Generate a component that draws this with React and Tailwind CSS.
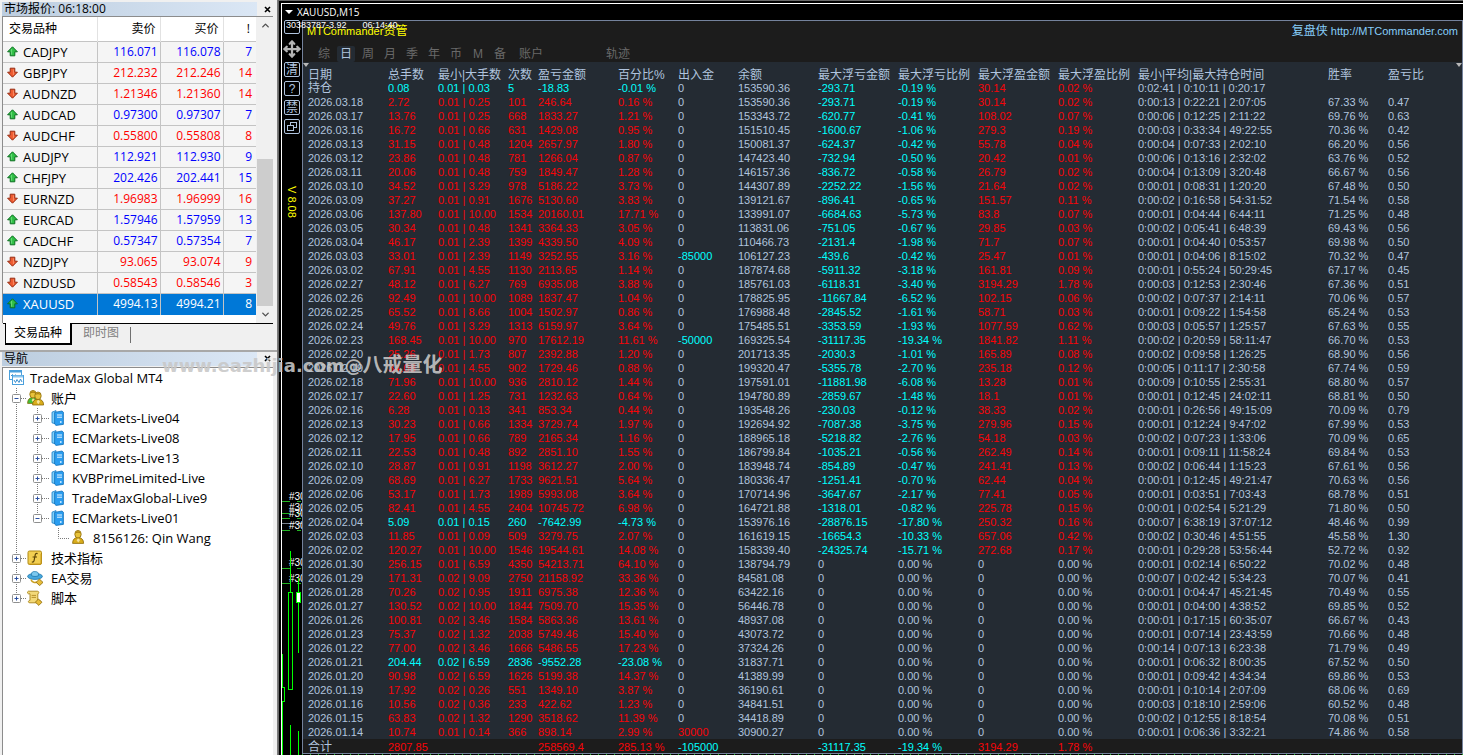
import React, { useState } from 'react';
import { Move, ChevronUp, ChevronDown } from 'lucide-react';

const quotes = [
  ['CADJPY', '116.071', '116.078', 7, true],
  ['GBPJPY', '212.232', '212.246', 14, false],
  ['AUDNZD', '1.21346', '1.21360', 14, false],
  ['AUDCAD', '0.97300', '0.97307', 7, true],
  ['AUDCHF', '0.55800', '0.55808', 8, false],
  ['AUDJPY', '112.921', '112.930', 9, true],
  ['CHFJPY', '202.426', '202.441', 15, true],
  ['EURNZD', '1.96983', '1.96999', 16, false],
  ['EURCAD', '1.57946', '1.57959', 13, true],
  ['CADCHF', '0.57347', '0.57354', 7, true],
  ['NZDJPY', '93.065', '93.074', 9, false],
  ['NZDUSD', '0.58543', '0.58546', 3, false],
  ['XAUUSD', '4994.13', '4994.21', 8, true],
];

const tree = [
  { level: 0, icon: 'terminal', label: 'TradeMax Global MT4' },
  { level: 1, icon: 'accounts', label: '账户', open: true },
  { level: 2, icon: 'server', label: 'ECMarkets-Live04' },
  { level: 2, icon: 'server', label: 'ECMarkets-Live08' },
  { level: 2, icon: 'server', label: 'ECMarkets-Live13' },
  { level: 2, icon: 'server', label: 'KVBPrimeLimited-Live' },
  { level: 2, icon: 'server', label: 'TradeMaxGlobal-Live9' },
  { level: 2, icon: 'server', label: 'ECMarkets-Live01', open: true, last: true },
  { level: 3, icon: 'user', label: '8156126: Qin Wang' },
  { level: 1, icon: 'indicator', label: '技术指标' },
  { level: 1, icon: 'expert', label: 'EA交易' },
  { level: 1, icon: 'script', label: '脚本', last: true },
];

const columns = ['日期', '总手数', '最小|大手数', '次数', '盈亏金额', '百分比%', '出入金', '余额', '最大浮亏金额', '最大浮亏比例', '最大浮盈金额', '最大浮盈比例', '最小|平均|最大持仓时间', '胜率', '盈亏比'];

// date, lots, min lot, max lot, count, profit, percent, deposit, balance,
// max loss, loss %, max gain, gain %, min / avg / max holding time, win rate, ratio
const report = `
持仓,0.08,0.01,0.03,5,-18.83,-0.01,0,153590.36,-293.71,-0.19,30.14,0.02,0:02:41,0:10:11,0:20:17,,
2026.03.18,2.72,0.01,0.25,101,246.64,0.16,0,153590.36,-293.71,-0.19,30.14,0.02,0:00:13,0:22:21,2:07:05,67.33,0.47
2026.03.17,13.76,0.01,0.25,668,1833.27,1.21,0,153343.72,-620.77,-0.41,108.02,0.07,0:00:06,0:12:25,2:11:22,69.76,0.63
2026.03.16,16.72,0.01,0.66,631,1429.08,0.95,0,151510.45,-1600.67,-1.06,279.3,0.19,0:00:03,0:33:34,49:22:55,70.36,0.42
2026.03.13,31.15,0.01,0.48,1204,2657.97,1.80,0,150081.37,-624.37,-0.42,55.78,0.04,0:00:04,0:07:33,2:02:10,66.20,0.56
2026.03.12,23.86,0.01,0.48,781,1266.04,0.87,0,147423.40,-732.94,-0.50,20.42,0.01,0:00:06,0:13:16,2:32:02,63.76,0.52
2026.03.11,20.06,0.01,0.48,759,1849.47,1.28,0,146157.36,-836.72,-0.58,26.79,0.02,0:00:04,0:13:09,3:20:48,66.67,0.56
2026.03.10,34.52,0.01,3.29,978,5186.22,3.73,0,144307.89,-2252.22,-1.56,21.64,0.02,0:00:01,0:08:31,1:20:20,67.48,0.50
2026.03.09,37.27,0.01,0.91,1676,5130.60,3.83,0,139121.67,-896.41,-0.65,151.57,0.11,0:00:02,0:16:58,54:31:52,71.54,0.58
2026.03.06,137.80,0.01,10.00,1534,20160.01,17.71,0,133991.07,-6684.63,-5.73,83.8,0.07,0:00:01,0:04:44,6:44:11,71.25,0.48
2026.03.05,30.34,0.01,0.48,1341,3364.33,3.05,0,113831.06,-751.05,-0.67,29.85,0.03,0:00:02,0:05:41,6:48:39,69.43,0.56
2026.03.04,46.17,0.01,2.39,1399,4339.50,4.09,0,110466.73,-2131.4,-1.98,71.7,0.07,0:00:01,0:04:40,0:53:57,69.98,0.50
2026.03.03,33.01,0.01,2.39,1149,3252.55,3.16,-85000,106127.23,-439.6,-0.42,25.47,0.01,0:00:01,0:04:06,8:15:02,70.32,0.47
2026.03.02,67.91,0.01,4.55,1130,2113.65,1.14,0,187874.68,-5911.32,-3.18,161.81,0.09,0:00:01,0:55:24,50:29:45,67.17,0.45
2026.02.27,48.12,0.01,6.27,769,6935.08,3.88,0,185761.03,-6118.31,-3.40,3194.29,1.78,0:00:03,0:12:53,2:30:46,67.36,0.51
2026.02.26,92.49,0.01,10.00,1089,1837.47,1.04,0,178825.95,-11667.84,-6.52,102.15,0.06,0:00:02,0:07:37,2:14:11,70.06,0.57
2026.02.25,65.52,0.01,8.66,1004,1502.97,0.86,0,176988.48,-2845.52,-1.61,58.71,0.03,0:00:01,0:09:22,1:54:58,65.24,0.53
2026.02.24,49.76,0.01,3.29,1313,6159.97,3.64,0,175485.51,-3353.59,-1.93,1077.59,0.62,0:00:03,0:05:57,1:25:57,67.63,0.55
2026.02.23,168.45,0.01,10.00,970,17612.19,11.61,-50000,169325.54,-31117.35,-19.34,1841.82,1.11,0:00:02,0:20:59,58:11:47,66.70,0.53
2026.02.20,25.26,0.01,1.73,807,2392.88,1.20,0,201713.35,-2030.3,-1.01,165.89,0.08,0:00:02,0:09:58,1:26:25,68.90,0.56
2026.02.19,34.08,0.01,4.55,902,1729.46,0.88,0,199320.47,-5355.78,-2.70,235.18,0.12,0:00:05,0:11:17,2:30:58,67.74,0.59
2026.02.18,71.96,0.01,10.00,936,2810.12,1.44,0,197591.01,-11881.98,-6.08,13.28,0.01,0:00:09,0:10:55,2:55:31,68.80,0.57
2026.02.17,22.60,0.01,1.25,731,1232.63,0.64,0,194780.89,-2859.67,-1.48,18.1,0.01,0:00:01,0:12:45,24:02:11,68.81,0.50
2026.02.16,6.28,0.01,0.13,341,853.34,0.44,0,193548.26,-230.03,-0.12,38.33,0.02,0:00:01,0:26:56,49:15:09,70.09,0.79
2026.02.13,30.23,0.01,0.66,1334,3729.74,1.97,0,192694.92,-7087.38,-3.75,279.96,0.15,0:00:01,0:12:24,9:47:02,67.99,0.53
2026.02.12,17.95,0.01,0.66,789,2165.34,1.16,0,188965.18,-5218.82,-2.76,54.18,0.03,0:00:02,0:07:23,1:33:06,70.09,0.65
2026.02.11,22.53,0.01,0.48,892,2851.10,1.55,0,186799.84,-1035.21,-0.56,262.49,0.14,0:00:01,0:09:11,11:58:24,69.84,0.53
2026.02.10,28.87,0.01,0.91,1198,3612.27,2.00,0,183948.74,-854.89,-0.47,241.41,0.13,0:00:02,0:06:44,1:15:23,67.61,0.56
2026.02.09,68.69,0.01,6.27,1733,9621.51,5.64,0,180336.47,-1251.41,-0.70,62.44,0.04,0:00:01,0:12:45,49:21:47,70.63,0.56
2026.02.06,53.17,0.01,1.73,1989,5993.08,3.64,0,170714.96,-3647.67,-2.17,77.41,0.05,0:00:01,0:03:51,7:03:43,68.78,0.51
2026.02.05,82.41,0.01,4.55,2404,10745.72,6.98,0,164721.88,-1318.01,-0.82,225.78,0.15,0:00:01,0:02:54,5:21:29,71.80,0.50
2026.02.04,5.09,0.01,0.15,260,-7642.99,-4.73,0,153976.16,-28876.15,-17.80,250.32,0.16,0:00:07,6:38:19,37:07:12,48.46,0.99
2026.02.03,11.85,0.01,0.09,509,3279.75,2.07,0,161619.15,-16654.3,-10.33,657.06,0.42,0:00:02,0:30:46,4:51:55,45.58,1.30
2026.02.02,120.27,0.01,10.00,1546,19544.61,14.08,0,158339.40,-24325.74,-15.71,272.68,0.17,0:00:01,0:29:28,53:56:44,52.72,0.92
2026.01.30,256.15,0.01,6.59,4350,54213.71,64.10,0,138794.79,0,0.00,0,0.00,0:00:01,0:02:14,6:50:22,70.02,0.48
2026.01.29,171.31,0.02,9.09,2750,21158.92,33.36,0,84581.08,0,0.00,0,0.00,0:00:07,0:02:42,5:34:23,70.07,0.41
2026.01.28,70.26,0.02,0.95,1911,6975.38,12.36,0,63422.16,0,0.00,0,0.00,0:00:01,0:04:47,45:21:45,70.49,0.55
2026.01.27,130.52,0.02,10.00,1844,7509.70,15.35,0,56446.78,0,0.00,0,0.00,0:00:01,0:04:00,4:38:52,69.85,0.52
2026.01.26,100.81,0.02,3.46,1584,5863.36,13.61,0,48937.08,0,0.00,0,0.00,0:00:01,0:17:15,60:35:07,66.67,0.43
2026.01.23,75.37,0.02,1.32,2038,5749.46,15.40,0,43073.72,0,0.00,0,0.00,0:00:01,0:07:14,23:43:59,70.66,0.48
2026.01.22,77.00,0.02,3.46,1666,5486.55,17.23,0,37324.26,0,0.00,0,0.00,0:00:14,0:07:13,6:23:38,71.79,0.49
2026.01.21,204.44,0.02,6.59,2836,-9552.28,-23.08,0,31837.71,0,0.00,0,0.00,0:00:01,0:06:32,8:00:35,67.52,0.50
2026.01.20,90.98,0.02,6.59,1626,5199.38,14.37,0,41389.99,0,0.00,0,0.00,0:00:01,0:09:42,4:34:34,69.86,0.53
2026.01.19,17.92,0.02,0.26,551,1349.10,3.87,0,36190.61,0,0.00,0,0.00,0:00:01,0:10:14,2:07:09,68.06,0.69
2026.01.16,10.56,0.02,0.36,233,422.62,1.23,0,34841.51,0,0.00,0,0.00,0:00:03,0:18:10,2:59:06,60.52,0.48
2026.01.15,63.83,0.02,1.32,1290,3518.62,11.39,0,34418.89,0,0.00,0,0.00,0:00:02,0:12:55,8:18:54,70.08,0.51
2026.01.14,10.74,0.01,0.14,366,898.14,2.99,30000,30900.27,0,0.00,0,0.00,0:00:01,0:06:36,3:32:21,74.86,0.58
`.trim().split('\n').map(line => line.split(','));

const tone = value => {
  const n = parseFloat(value);
  if (n < 0) return 'text-[#00ffff]';
  if (n > 0) return 'text-[#f80408]';
  return '';
};

const pct = value => (value ? `${value} %` : '');

const QuoteArrow = ({ up }) => (
  <svg width="11" height="11" viewBox="0 0 11 11" className={up ? 'shrink-0' : 'shrink-0 rotate-180'}>
    <path
      d="M5.5 .8 L10.4 5.8 H7.8 V9.8 H3.2 V5.8 H.6 Z"
      fill={up ? '#2fbf45' : '#ee5a30'}
      stroke={up ? '#0b6e20' : '#962a10'}
      strokeWidth="1"
      strokeLinejoin="round"
    />
    <path d="M4.6 3 V8.6" stroke={up ? '#7be08a' : '#ff9a74'} strokeWidth=".8" />
  </svg>
);

const Person = ({ x = 0, y = 0, fill = '#d9ad1c' }) => (
  <g transform={`translate(${x} ${y})`} stroke="#8c6a08" strokeWidth=".8">
    <path d="M.6 13.4 C.6 9.6 2.4 7.6 6 7.6 S11.6 9.6 11.6 13.4 Z" fill={fill} />
    <path d="M6 8 L4.6 10.4 L6.4 12.6 L8 10 Z" fill="#f6e29a" stroke="none" />
    <ellipse cx="6" cy="4.2" rx="3.2" ry="3.8" fill="#e8c33c" />
    <path d="M3 3.4 C3.4 .8 8.4 .4 9 3.6 C7 2.4 5 2.6 3 3.4 Z" fill="#a98212" stroke="none" />
  </g>
);

const TreeIcon = ({ name }) => {
  if (name === 'terminal') {
    return (
      <svg width="16" height="16" viewBox="0 0 16 16" className="shrink-0">
        <rect x=".5" y=".5" width="12" height="9" fill="#fff" stroke="#4aa0dc" />
        <path d="M1 1.5 H12" stroke="#4aa0dc" strokeWidth="2" />
        <path d="M2 6 L3.5 4.5 L5 7 L6.5 4.5" fill="none" stroke="#3b8fd0" />
        <rect x="3.5" y="5.5" width="11" height="9" fill="#fff" stroke="#4aa0dc" />
        <path d="M4 6.5 H14" stroke="#8cc6ee" strokeWidth="2" />
        <path d="M5 10 L6.5 12.5 L8 9.5 L10 12.5 L11.5 9 L13 12" fill="none" stroke="#3b8fd0" />
      </svg>
    );
  }
  if (name === 'accounts') {
    return (
      <svg width="18" height="16" viewBox="0 0 18 16" className="shrink-0">
        <Person x={0} y={0} fill="#3cc43c" />
        <Person x={5} y={1.6} />
      </svg>
    );
  }
  if (name === 'server') {
    return (
      <svg width="13" height="16" viewBox="0 0 13 16" className="shrink-0">
        <path d="M1 2.2 L5 .6 V14 L1 12.8 Z" fill="#7fd0fa" stroke="#1479c4" strokeWidth=".8" />
        <path d="M3.6 2.4 L11 1 L12.4 2.2 V14.4 L5 15.4 L3.6 14 Z" fill="#2a9df0" stroke="#1270b8" strokeWidth=".8" />
        <path d="M6 5 H11 M6 7.2 H11" stroke="#e8f6ff" strokeWidth="1" />
        <circle cx="9.8" cy="12" r=".9" fill="#d8f0ff" />
      </svg>
    );
  }
  if (name === 'user') {
    return (
      <svg width="13" height="15" viewBox="0 0 13 15" className="shrink-0">
        <Person />
      </svg>
    );
  }
  if (name === 'indicator') {
    return (
      <svg width="16" height="16" viewBox="0 0 16 16" className="shrink-0">
        <rect x="1" y="1" width="13.5" height="13.5" rx="1.5" fill="#f2cf52" stroke="#b08a14" />
        <path d="M2 14 L14 14 L14 4" fill="none" stroke="#c99a1e" />
        <path d="M10.6 3.6 C8.6 3 8.2 4.4 8 6 L7.2 10 C7 11.8 6.2 12.4 4.8 11.8 M5.6 7 H10" fill="none" stroke="#5c4406" strokeWidth="1.2" />
      </svg>
    );
  }
  if (name === 'expert') {
    return (
      <svg width="17" height="16" viewBox="0 0 17 16" className="shrink-0">
        <ellipse cx="8" cy="6.4" rx="7.4" ry="3" fill="#46a7de" stroke="#2277aa" strokeWidth=".8" />
        <path d="M4.4 5.6 C4.4 1.6 6 1.4 8 1.6 S11.4 1.6 11.6 5.6 C9.6 6.8 6.4 6.8 4.4 5.6 Z" fill="#7cc8ee" stroke="#2277aa" strokeWidth=".8" />
        <path d="M4 9.6 C5 12.6 8 13 10 12" fill="none" stroke="#caa024" strokeWidth="1.6" />
        <path d="M12.4 9 L16 12.4 L12.6 15.6 L9.2 12.4 Z" fill="#e8bd3a" stroke="#8c6a08" strokeWidth=".8" />
      </svg>
    );
  }
  return (
    <svg width="16" height="16" viewBox="0 0 16 16" className="shrink-0">
      <path d="M1.4 1.2 H10.4 C12.4 1.2 12 3.8 10.8 3.8 V10.4 H13 V12.8 H2.8 C.8 12.8 1 10.4 3 10.4 V3.8 H1.4 C.2 3.4 .2 1.6 1.4 1.2 Z" fill="#f3d978" stroke="#a8841a" strokeWidth=".9" />
      <path d="M4.6 5.4 H9 M4.6 7.4 H9" stroke="#b8922a" strokeWidth="1" />
      <path d="M11.4 9 L15 12.2 L11.8 15.4 L8.4 12.2 Z" fill="#e8bd3a" stroke="#8c6a08" strokeWidth=".8" />
    </svg>
  );
};

const Expander = ({ x, open }) => (
  <g>
    <rect x={x - 3.5} y="6.5" width="8" height="8" rx="1" fill="#fff" stroke="#8e8f8f" />
    <path d={`M${x - 1.5} 10.5 H${x + 2.5}`} stroke="#2a4fa0" />
    {!open && <path d={`M${x + 0.5} 8.5 V12.5`} stroke="#2a4fa0" />}
  </g>
);

const Guide = ({ item }) => {
  const dots = { stroke: '#7a7a7a', strokeDasharray: '1 1', fill: 'none' };
  if (item.level === 0) return <svg width="6" height="20" className="shrink-0" />;
  if (item.level === 1) {
    return (
      <svg width="24" height="20" className="shrink-0">
        <path d={item.last ? 'M13.5 0 V10' : 'M13.5 0 V20'} {...dots} />
        <path d="M18 10.5 H24" {...dots} />
        <Expander x={13} open={item.open} />
      </svg>
    );
  }
  if (item.level === 2) {
    return (
      <svg width="48" height="20" className="shrink-0">
        <path d="M13.5 0 V20" {...dots} />
        <path d={item.last ? 'M34.5 0 V10' : 'M34.5 0 V20'} {...dots} />
        <path d="M39 10.5 H46" {...dots} />
        <Expander x={34} open={item.open} />
      </svg>
    );
  }
  return (
    <svg width="69" height="20" className="shrink-0">
      <path d="M13.5 0 V20" {...dots} />
      <path d="M55.5 0 V10.5 H67" {...dots} />
    </svg>
  );
};

const PanelTitle = ({ children }) => (
  <div className="flex h-[14px] items-center pl-[2px] pr-1">
    <h2 className="flex-1 bg-linear-to-r from-[#bccddf] to-[#dbe7f5] pl-[2px] text-xs leading-[14px]">{children}</h2>
    <button aria-label="关闭" className="ml-1 flex h-3 w-3 items-center justify-center">
      <svg width="7" height="7" viewBox="0 0 7 7"><path d="M1 1 L6 6 M6 1 L1 6" stroke="#000" strokeWidth="1.6" /></svg>
    </button>
  </div>
);

const MarketWatch = () => {
  const [selected, setSelected] = useState('XAUUSD');

  return (
    <section className="pt-[2px]">
      <PanelTitle>市场报价: 06:18:00</PanelTitle>
      <div className="ml-[2px] mr-1 flex border-l border-t border-[#8c8c8c] bg-white">
        <div className="flex-1 pb-2">
          <table className="w-full table-fixed border-collapse text-xs">
            <colgroup>
              <col className="w-[94px]" />
              <col className="w-[63px]" />
              <col className="w-[63px]" />
              <col />
            </colgroup>
            <thead>
              <tr className="h-6 border-b border-[#c4c4c4]">
                <th className="border-r border-[#e2e2e2] pl-[6px] text-left font-normal">交易品种</th>
                <th className="border-r border-[#e2e2e2] pr-1 text-right font-normal">卖价</th>
                <th className="border-r border-[#e2e2e2] pr-1 text-right font-normal">买价</th>
                <th className="pr-[6px] text-right font-normal">!</th>
              </tr>
            </thead>
            <tbody>
              {quotes.map(([symbol, bid, ask, spread, up]) => {
                const active = symbol === selected;
                const color = active ? 'text-white' : up ? 'text-[#0000ff]' : 'text-[#ff0000]';
                return (
                  <tr
                    key={symbol}
                    onClick={() => setSelected(symbol)}
                    className={`h-[21px] border-b leading-5 ${active ? 'border-[#0078d7] bg-[#0078d7] text-white' : 'border-[#c4c4c4] bg-[#f5f5f5]'}`}
                  >
                    <td className="border-r border-[#c4c4c4] p-0 pl-1 text-[13px] leading-5">
                      <span className="flex items-center gap-[5px]"><QuoteArrow up={up} />{symbol}</span>
                    </td>
                    <td className={`border-r border-[#c4c4c4] p-0 pr-[2px] text-right ${color}`}>{bid}</td>
                    <td className={`border-r border-[#c4c4c4] p-0 pr-[2px] text-right ${color}`}>{ask}</td>
                    <td className={`p-0 pr-1 text-right ${color}`}>{spread}</td>
                  </tr>
                );
              })}
            </tbody>
          </table>
        </div>
        <div className="flex w-[17px] flex-col bg-[#f0f0f0] pl-px text-[#505050]">
          <button aria-label="向上滚动" className="flex h-[17px] items-center justify-center"><ChevronUp size={11} strokeWidth={3} /></button>
          <div className="flex flex-1 flex-col justify-end"><div className="h-[147px] bg-[#cdcdcd]" /></div>
          <button aria-label="向下滚动" className="flex h-[17px] items-center justify-center"><ChevronDown size={11} strokeWidth={3} /></button>
        </div>
      </div>
      <div className="ml-[3px] mr-1 flex h-[27px] items-start border-t border-black pl-[2px] text-xs">
        <button className="-mt-px h-[22px] border border-b-2 border-t-0 border-r-2 border-black bg-white px-2">交易品种</button>
        <button className="h-[19px] px-[11px] text-[#808080]">即时图</button>
        <span className="mt-[3px] h-4 w-px bg-[#707070]" />
      </div>
    </section>
  );
};

const Navigator = () => (
  <section className="flex flex-1 flex-col border-t-2 border-[#a8a8a8]">
    <PanelTitle>导航</PanelTitle>
    <ul className="ml-[2px] mr-1 mt-px flex-1 border-l border-t border-[#8c8c8c] bg-white text-[13px]">
      {tree.map(item => (
        <li key={item.label} className="flex h-5 items-center whitespace-nowrap leading-5">
          <Guide item={item} />
          <span className={`flex shrink-0 ${item.level === 1 ? 'w-[18px]' : 'w-[15px]'}`}><TreeIcon name={item.icon} /></span>
          <span className="pl-[6px]">{item.label}</span>
        </li>
      ))}
    </ul>
  </section>
);

const ToolButton = ({ label, children }) => (
  <button aria-label={label} className="flex h-[15px] w-4 items-center justify-center overflow-hidden rounded-xs border border-[#b0c4de] text-xs leading-3 text-[#b0c4de]">
    {children}
  </button>
);

// Part of the price chart that stays visible beside the report
const ChartStrip = () => (
  <svg width="20" height="265" viewBox="0 0 20 265" className="block" shapeRendering="crispEdges">
    <g stroke="#22b422" strokeWidth="1">
      {[11.5, 23.5, 28.5, 40.5, 78.5, 93.5].map(y => <path key={y} d={`M0 ${y} H8 M15 ${y} H19`} />)}
    </g>
    <path d="M0 33.5 H20" stroke="#777f8c" />
    <g fill="#fff" fontSize="10" fontFamily="Liberation Sans, sans-serif">
      {[10, 21, 27, 39, 76, 92].map(y => <text key={y} x="7" y={y}>#30</text>)}
    </g>
    <g stroke="#00ff00" fill="none">
      <path d="M8.5 61 V102 M8.5 235 V265 M16.5 88 V163 M16.5 241 V265 M0.5 164 V265" />
      <rect x="6.5" y="102.5" width="4" height="97" fill="#000" />
      <rect x="14.5" y="102.5" width="4" height="10" fill="#fff" />
      <rect x="-0.5" y="197.5" width="3" height="14" fill="#000" />
    </g>
  </svg>
);

const Report = () => {
  const [tab, setTab] = useState('日');

  return (
    <section className="relative min-w-0 flex-1 border border-[#74829c] bg-[#242b33] text-[#b0c4de]">
      <header className="bg-[#1c1c1c]">
        <div className="flex h-5 items-center justify-between pl-1 pr-1 text-[11px]">
          <h1 className="text-[#ffff00]">MTCommander<span className="text-xs">资管</span></h1>
          <a href="http://MTCommander.com" className="text-[#87cefa]"><span className="text-xs">复盘侠</span> http://MTCommander.com</a>
        </div>
        <nav className="flex h-[21px] items-end pl-[10px] text-xs text-[#696969]">
          {['综', '日', '周', '月', '季', '年', '币', 'M', '备', '账户', '轨迹'].map(name => (
            <button
              key={name}
              onClick={() => setTab(name)}
              className={`mx-[2px] h-4 leading-4 ${name === '账户' ? 'mr-[57px] ml-[6px] w-7' : name === '轨迹' ? 'w-7' : 'w-[18px]'} ${name === tab ? 'rounded-xs bg-[#242b33] text-[#b0c4de]' : ''}`}
            >
              {name}
            </button>
          ))}
        </nav>
      </header>
      <span className="absolute left-0 top-[42px] border-x-3 border-t-4 border-x-transparent border-t-[#b8b8b8]" />
      <span className="absolute right-0 top-[42px] border-x-3 border-t-4 border-x-transparent border-t-[#b8b8b8]" />
      <table className="w-full table-fixed border-collapse whitespace-nowrap text-[11px] leading-[14px]">
        <colgroup>
          <col className="w-[85px]" />
          <col className="w-[50px]" />
          <col className="w-[70px]" />
          <col className="w-[30px]" />
          <col className="w-[80px]" />
          <col className="w-[60px]" />
          <col className="w-[60px]" />
          <col className="w-[80px]" />
          <col className="w-[80px]" />
          <col className="w-[80px]" />
          <col className="w-[80px]" />
          <col className="w-[80px]" />
          <col className="w-[190px]" />
          <col className="w-[60px]" />
          <col />
        </colgroup>
        <thead>
          <tr className="h-[19px] align-bottom text-xs leading-3">
            {columns.map((name, i) => (
              <th key={name} className={`p-0 text-left font-normal ${i === 0 ? 'pl-[5px]' : ''}`}>{name}</th>
            ))}
          </tr>
        </thead>
        <tbody>
          {report.map(r => (
            <tr key={r[0]} className="h-[14px]">
              <td className={r[0] === '持仓' ? 'p-0 pl-[5px] text-xs leading-[14px]' : 'p-0 pl-[5px]'}>{r[0]}</td>
              <td className={`p-0 ${tone(r[5])}`}>{r[1]}</td>
              <td className={`p-0 ${tone(r[5])}`}>{r[2]} | {r[3]}</td>
              <td className={`p-0 ${tone(r[5])}`}>{r[4]}</td>
              <td className={`p-0 ${tone(r[5])}`}>{r[5]}</td>
              <td className={`p-0 ${tone(r[6])}`}>{pct(r[6])}</td>
              <td className={`p-0 ${tone(r[7])}`}>{r[7]}</td>
              <td className="p-0">{r[8]}</td>
              <td className={`p-0 ${tone(r[9])}`}>{r[9]}</td>
              <td className={`p-0 ${tone(r[10])}`}>{pct(r[10])}</td>
              <td className={`p-0 ${tone(r[11])}`}>{r[11]}</td>
              <td className={`p-0 ${tone(r[12])}`}>{pct(r[12])}</td>
              <td className="p-0">{r[13]} | {r[14]} | {r[15]}</td>
              <td className="p-0">{pct(r[16])}</td>
              <td className="p-0">{r[17]}</td>
            </tr>
          ))}
        </tbody>
        <tfoot>
          <tr className="h-[14px] bg-[#1c1c1c] align-bottom leading-3">
            {['合计', '2807.85', '', '', '258569.4', '285.13 %', '-105000', '', '-31117.35', '-19.34 %', '3194.29', '1.78 %', '', '', ''].map((v, i) => (
              <td key={i} className={`p-0 ${i === 0 ? 'pl-[5px] text-xs leading-3' : tone(v)}`}>{v}</td>
            ))}
          </tr>
        </tfoot>
      </table>
    </section>
  );
};

const App = () => (
  <div className="relative flex min-h-screen overflow-hidden bg-black font-['Open_Sans','Noto_Sans_CJK_SC',sans-serif] text-black">
    <aside className="flex w-[278px] shrink-0 flex-col border-r border-[#7c7c7c] bg-[#f0f0f0]">
      <MarketWatch />
      <Navigator />
    </aside>

    <main className="flex min-w-0 flex-1 border-l border-t border-[#696969] pl-[2px] pt-[2px]">
      <div className="flex min-w-0 flex-1 flex-col border-l border-t border-white font-['Liberation_Sans','Noto_Sans_CJK_SC',sans-serif]">
        <div className="flex h-4 items-center gap-1 pl-[3px] font-['Open_Sans',sans-serif] text-[10px] text-white">
          <span className="border-x-4 border-t-4 border-x-transparent border-t-white" />
          XAUUSD,M15
        </div>
        <div className="relative flex flex-1">
          <div className="flex w-5 shrink-0 flex-col">
            <div className="flex flex-col items-center gap-1">
              <button aria-label="最小化" className="h-[14px] w-4 rounded-xs border border-[#b0c4de]" />
              <button aria-label="移动" className="mt-[2px] text-[#b4b4b4]"><Move size={18} strokeWidth={3} /></button>
              <ToolButton label="清">清</ToolButton>
              <ToolButton label="帮助">?</ToolButton>
              <ToolButton label="禁">禁</ToolButton>
              <ToolButton label="还原">
                <svg width="10" height="10" viewBox="0 0 10 10" fill="none" stroke="#b0c4de">
                  <rect x="3.5" y=".5" width="6" height="5" />
                  <rect x=".5" y="3.5" width="6" height="5" fill="#000" />
                </svg>
              </ToolButton>
            </div>
            <div className="mt-[52px] flex-1 self-center text-[11px] leading-3 text-[#ffff00] [writing-mode:vertical-rl]">V 8.08</div>
            <ChartStrip />
          </div>
          <div className="flex min-w-0 flex-1 flex-col">
            <Report />
            <div className="h-px bg-[repeating-linear-gradient(90deg,#22b422_0_1px,#000_1px_8px)]" />
          </div>
          <div className="absolute left-1 top-0 flex gap-4 text-[9px] leading-[10px] text-white">
            <span>30383787-3.92</span>
            <span>06:14:40</span>
          </div>
        </div>
      </div>
    </main>

    <div className="pointer-events-none absolute left-[162px] top-[353px] whitespace-nowrap font-['DejaVu_Sans','Noto_Sans_CJK_SC',sans-serif] text-[18px] font-bold leading-6 text-[#c8c8c8]/90">
      www.eazhijia.com@<span className="text-[20px]">八戒量化</span>
    </div>
  </div>
);

export default App;
